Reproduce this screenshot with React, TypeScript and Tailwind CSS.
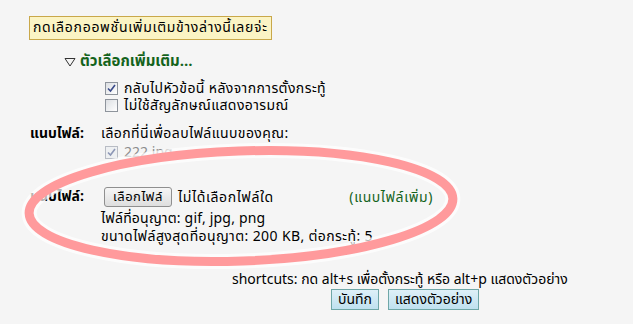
import React from 'react';

const font = { fontFamily: 'Tahoma, "Noto Sans Thai", "Noto Sans", sans-serif' };

function Check({ checked, disabled }: { checked?: boolean; disabled?: boolean }) {
  return (
    <span
      className={`inline-flex h-[13px] w-[13px] shrink-0 items-center justify-center border ${
        disabled ? 'border-[#b8bcc4] bg-[#eef0f2]' : 'border-[#8e949c] bg-gradient-to-br from-[#dcdfe3] to-white'
      }`}
    >
      {checked && (
        <svg width="9" height="9" viewBox="0 0 9 9">
          <path d="M1 4.5 L3.5 7 L8 1" fill="none" stroke={disabled ? '#8d97b6' : '#3a4b8a'} strokeWidth="1.6" />
        </svg>
      )}
    </span>
  );
}

export default function App() {
  return (
    <div className="relative h-[324px] w-[633px] overflow-hidden bg-[#f5f5f5] text-[14px] text-black" style={font}>
      <div className="pl-[29px] pt-[16px]">
        <div className="inline-block h-[24px] border border-[#c9a84a] bg-[#fbf4c4] px-[3px] leading-[22px] tracking-[0.7px]">
          กดเลือกออพชั่นเพิ่มเติมข้างล่างนี้เลยจ่ะ
        </div>
      </div>

      <div className="mt-[12px] flex h-[20px] items-center gap-[4px] pl-[64px] text-[15px] font-bold text-[#14631c]">
        <svg width="12" height="10" viewBox="0 0 12 10">
          <path d="M1 1.5 L11 1.5 L6 9 Z" fill="none" stroke="#333" strokeWidth="1" />
        </svg>
        <span>ตัวเลือกเพิ่มเติม...</span>
      </div>

      <div className="mt-[8px] flex flex-col pl-[105px] tracking-[0.4px]">
        <label className="flex h-[17px] items-center gap-[6px]">
          <Check checked />
          <span>กลับไปหัวข้อนี้ หลังจากการตั้งกระทู้</span>
        </label>
        <label className="flex h-[17px] items-center gap-[6px]">
          <Check />
          <span>ไม่ใช้สัญลักษณ์แสดงอารมณ์</span>
        </label>
      </div>

      <div className="mt-[11px] flex pl-[30px]">
        <span className="h-[18px] w-[71px] text-[14px] font-bold leading-[18px]">แนบไฟล์:</span>
        <div className="flex flex-col">
          <span className="h-[18px] leading-[18px] tracking-[0.4px]">เลือกที่นี่เพื่อลบไฟล์แนบของคุณ:</span>
          <label className="flex h-[18px] items-center gap-[6px] pl-[4px]">
            <Check checked disabled />
            <span className="text-[14px] text-[#8c8c8c]">222.jpg</span>
          </label>
        </div>
      </div>

      <div className="mt-[26px] flex pl-[30px]">
        <span className="h-[20px] w-[74px] text-[14px] font-bold leading-[20px]">แนบไฟล์:</span>
        <div className="flex w-[329px] flex-col">
          <div className="flex h-[20px] items-center">
            <button className="h-[20px] rounded-[3px] border border-[#8f8f8f] bg-gradient-to-b from-[#f6f6f6] to-[#dedede] px-[8px] text-[13px] leading-[18px] tracking-[0.5px]">
              เลือกไฟล์
            </button>
            <span className="ml-[6px] tracking-[0.6px]">ไม่ได้เลือกไฟล์ใด</span>
            <span className="ml-auto tracking-[0.6px] text-[#14631c]">(แนบไฟล์เพิ่ม)</span>
          </div>
          <div className="mt-[3px] -ml-[3px] h-[18px] leading-[18px] tracking-[0.2px]">ไฟล์ที่อนุญาต: gif, jpg, png</div>
          <div className="-ml-[3px] h-[18px] leading-[18px] tracking-[0.4px]">ขนาดไฟล์สูงสุดที่อนุญาต: 200 KB, ต่อกระทู้: 5</div>
        </div>
      </div>

      <div className="mt-[25px] h-[18px] pl-[232px] leading-[18px]">shortcuts: กด alt+s เพื่อตั้งกระทู้ หรือ alt+p แสดงตัวอย่าง</div>
      <div className="flex gap-[9px] pl-[331px]">
        <button className="h-[21px] border border-[#6fa7a7] bg-gradient-to-b from-[#def0f8] to-[#bfe1ef] px-[6px] text-[14px] leading-[18px]">
          บันทึก
        </button>
        <button className="h-[21px] border border-[#6fa7a7] bg-gradient-to-b from-[#def0f8] to-[#bfe1ef] px-[6px] text-[14px] leading-[18px]">
          แสดงตัวอย่าง
        </button>
      </div>

      <svg className="pointer-events-none absolute left-0 top-0" width="633" height="324">
        <g transform="rotate(-2 241 206)">
          <ellipse cx="241" cy="206" rx="212" ry="55" fill="none" stroke="#ffffff" strokeOpacity="0.7" strokeWidth="15" />
          <ellipse cx="241" cy="206" rx="212" ry="55" fill="none" stroke="#ff9a9c" strokeWidth="9" />
        </g>
      </svg>
    </div>
  );
}
